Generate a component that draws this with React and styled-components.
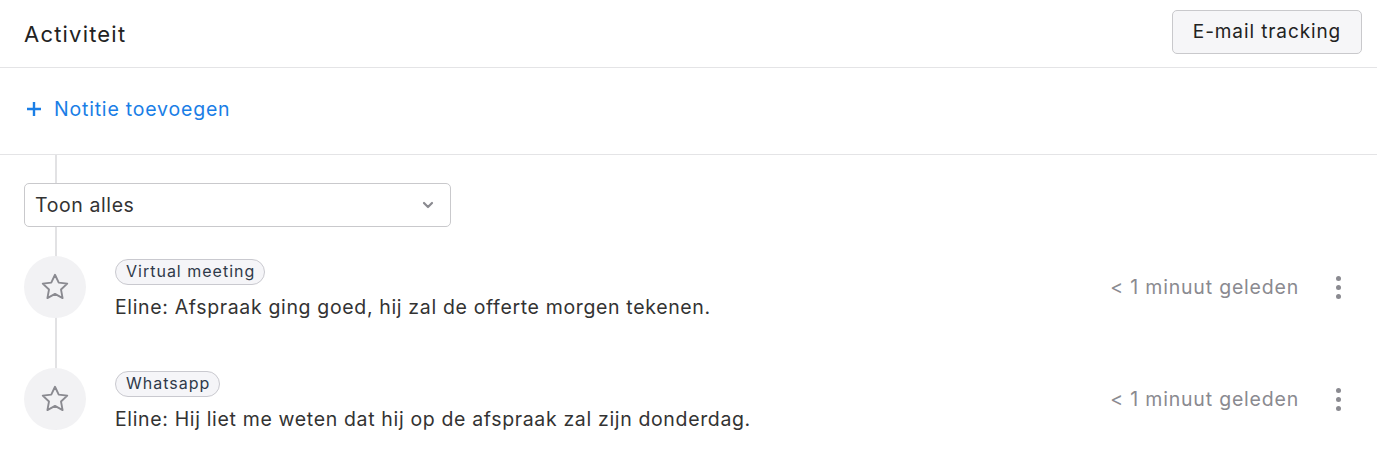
import React from "react";
import styled, { createGlobalStyle } from "styled-components";

const GlobalStyle = createGlobalStyle`
  html, body {
    margin: 0;
    padding: 0;
    background: #fff;
  }
  body {
    font-family: Inter, "Noto Sans", sans-serif;
    color: #222;
  }
`;

const Panel = styled.div`
  width: 1377px;
  height: 455px;
  overflow: hidden;
  background: #fff;
`;

const Header = styled.div`
  display: flex;
  align-items: center;
  justify-content: space-between;
  height: 67px;
  padding: 0 15px 0 24px;
  border-bottom: 1px solid #e4e4e6;
  box-sizing: content-box;
`;

const Title = styled.h2`
  margin: 0;
  font-size: 22px;
  font-weight: 400;
  letter-spacing: 1.2px;
  color: #222;
`;

const TrackingButton = styled.button`
  height: 44px;
  width: 190px;
  padding: 0;
  margin-top: -4px;
  border: 1px solid #c9c9cc;
  border-radius: 5px;
  background: #f6f6f8;
  font-family: inherit;
  font-size: 19px;
  letter-spacing: 0.9px;
  color: #222;
`;

const AddNote = styled.div`
  display: flex;
  align-items: center;
  height: 87px;
  padding-left: 26px;
  padding-bottom: 5px;
  box-sizing: border-box;
  border-bottom: 1px solid #e4e4e6;
  color: #1a7ee6;
  font-size: 19.5px;
  letter-spacing: 0.8px;
  gap: 12px;
`;

const Timeline = styled.div`
  position: relative;
  padding: 28px 24px 0 24px;

  &::before {
    content: "";
    position: absolute;
    left: 55px;
    top: 0;
    bottom: 0;
    width: 2px;
    background: #e2e2e4;
  }
`;

const Select = styled.div`
  position: relative;
  display: flex;
  align-items: center;
  justify-content: space-between;
  width: 427px;
  height: 44px;
  padding: 0 16px 0 10px;
  box-sizing: border-box;
  border: 1px solid #c9c9cc;
  border-radius: 5px;
  background: #fff;
  font-size: 19.5px;
  letter-spacing: 0.6px;
  color: #333;
`;

const List = styled.div`
  display: flex;
  flex-direction: column;
  gap: 50px;
  margin-top: 29px;
`;

const Item = styled.div`
  position: relative;
  display: flex;
  align-items: center;
  height: 62px;
`;

const Avatar = styled.div`
  flex: none;
  display: flex;
  align-items: center;
  justify-content: center;
  width: 62px;
  height: 62px;
  margin-right: 29px;
  border-radius: 50%;
  background: #f2f2f4;
`;

const Body = styled.div`
  flex: 1;
  display: flex;
  flex-direction: column;
  align-items: flex-start;
  gap: 10px;
  margin-top: 4px;
`;

const Tag = styled.span`
  display: inline-block;
  padding: 2px 9px 3px 10px;
  border: 1px solid #c9c9cf;
  border-radius: 13px;
  background: #f5f5f8;
  font-size: 16px;
  line-height: 19px;
  letter-spacing: 1px;
  color: #2f3a4a;
`;

const Message = styled.div`
  font-size: 19.5px;
  line-height: 24px;
  letter-spacing: 0.65px;
  color: #333;
`;

const Time = styled.div`
  font-size: 19.5px;
  letter-spacing: 0.8px;
  color: #8a8a90;
  margin-right: 37px;
`;

const Kebab = styled.div`
  display: flex;
  flex-direction: column;
  gap: 4px;
  padding-right: 12px;

  span {
    width: 5px;
    height: 5px;
    border-radius: 50%;
    background: #8a8a90;
  }
`;

const StarIcon = () => (
  <svg width="32" height="32" viewBox="0 0 24 24" fill="none" stroke="#8a8a90" strokeWidth="1.4" strokeLinejoin="round">
    <path d="M12 2.8l2.8 5.9 6.4.8-4.7 4.4 1.2 6.4L12 17.2l-5.7 3.1 1.2-6.4-4.7-4.4 6.4-.8z" />
  </svg>
);

const Chevron = () => (
  <svg width="12" height="8" viewBox="0 0 12 8" fill="none" stroke="#8a8a90" strokeWidth="2.2" strokeLinecap="round" strokeLinejoin="round">
    <path d="M2 2l4 4 4-4" />
  </svg>
);

const Plus = () => (
  <svg width="16" height="16" viewBox="0 0 16 16" stroke="#1a7ee6" strokeWidth="2.4">
    <path d="M8 1v14M1 8h14" />
  </svg>
);

const activities = [
  { tag: "Virtual meeting", text: "Eline: Afspraak ging goed, hij zal de offerte morgen tekenen." },
  { tag: "Whatsapp", text: "Eline: Hij liet me weten dat hij op de afspraak zal zijn donderdag." },
];

export default function App() {
  return (
    <Panel>
      <GlobalStyle />
      <Header>
        <Title>Activiteit</Title>
        <TrackingButton>E-mail tracking</TrackingButton>
      </Header>
      <AddNote>
        <Plus />
        Notitie toevoegen
      </AddNote>
      <Timeline>
        <Select>
          Toon alles
          <Chevron />
        </Select>
        <List>
          {activities.map((a) => (
            <Item key={a.tag}>
              <Avatar>
                <StarIcon />
              </Avatar>
              <Body>
                <Tag>{a.tag}</Tag>
                <Message>{a.text}</Message>
              </Body>
              <Time>&lt; 1 minuut geleden</Time>
              <Kebab>
                <span />
                <span />
                <span />
              </Kebab>
            </Item>
          ))}
        </List>
      </Timeline>
    </Panel>
  );
}
